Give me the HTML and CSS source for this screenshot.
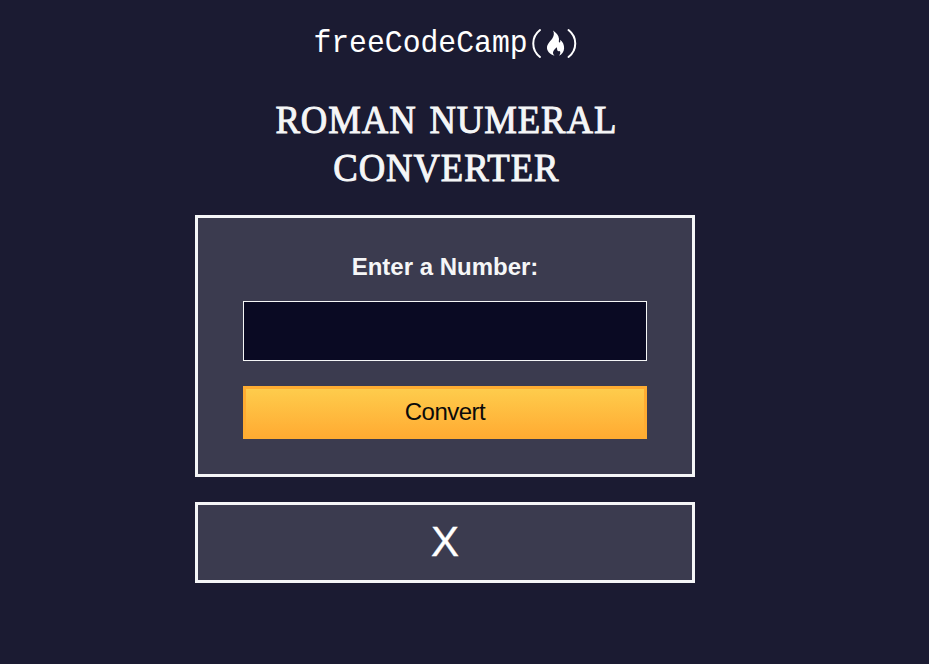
FILE: index.html
```html
<!DOCTYPE html>
<html lang="en">
<head>
<meta charset="utf-8">
<title>Roman Numeral Converter</title>
<link rel="stylesheet" href="styles.css">
</head>
<body>
<main class="page">
  <svg class="logo" width="270" height="40" viewBox="0 0 270 40" role="img" aria-label="freeCodeCamp">
    <g transform="translate(0 29) scale(.93 1)"><text class="logo-text" x="1.500" y="0">freeCodeCamp</text></g>
    <path class="paren" d="M228 7 C219 14 219 27 228 34 M256.500 7 C265.500 14 265.500 27 256.500 34"/>
    <path class="flame" d="M241 7.500c3 2 5.700 4.800 6 8.300.1 1.400-.5 2.700.1 3.500.9.600 1.500-.4 1-2.600 2.800 2 4.200 5.300 4 8.800-.2 3.300-2 5.700-5 7.300 1.400-2 1.600-3.600.7-4.800-.8.500-1.900.4-2.400-.4-.5-.9 0-2-.8-3.300-.8 1.500-3.600 2.800-3.600 5.300 0 1.300.6 2.300 1.500 3.200-5-1.600-7.800-4.800-7.500-8.800.4-4.600 6-7.200 6.800-12.300.2-1.500-.1-2.900-.8-4.200z"/>
  </svg>
  <h1 class="title"><span class="line">ROMAN NUMERAL</span><span class="line">CONVERTER</span></h1>
  <form class="card">
    <label class="label" for="number">Enter a Number:</label>
    <input class="number" id="number" type="text">
    <button class="convert" type="button">Convert</button>
  </form>
  <output class="result">X</output>
</main>
</body>
</html>
```
FILE: styles.css
```css
* { box-sizing: border-box; }
body {
  margin: 0;
  min-height: 664px;
  background: #1b1b32;
  color: #f5f6f7;
  font-family: "Liberation Sans", Arial, sans-serif;
}
.page {
  width: 500px;
  margin-left: 195px;
  padding-top: 23px;
  display: flex;
  flex-direction: column;
  align-items: center;
}
.logo { display: block; margin-left: 4px; overflow: visible; }
.logo-text { font: 32px "Liberation Mono", monospace; fill: #fff; }
.paren { fill: none; stroke: #fff; stroke-width: 2; stroke-linecap: round; }
.flame { fill: #fff; }
.title {
  margin: 33px 0 23px;
  font: 400 40px/48px "Liberation Serif", serif;
  text-align: center;
  letter-spacing: 1px;
  word-spacing: 3px;
  transform: translateX(1px) scaleX(.917);
  -webkit-text-stroke: 1px #f5f6f7;
}
.line { display: block; white-space: nowrap; }
.card {
  width: 500px;
  height: 262px;
  padding: 35px 45px;
  border: 3px solid #f5f6f7;
  background: #3b3b4f;
  display: flex;
  flex-direction: column;
}
.label { font-size: 24px; font-weight: 700; line-height: 28px; text-align: center; }
.number {
  width: 100%;
  height: 60px;
  margin: 20px 0 25px;
  padding: 10px;
  border: 1px solid #f5f6f7;
  border-radius: 0;
  background: #0a0a23;
  color: #f5f6f7;
  font: 24px "Liberation Sans", sans-serif;
  text-align: center;
}
.convert {
  height: 53px;
  padding: 0 0 2px;
  border: 3px solid #feac32;
  background: linear-gradient(#fecc4c, #ffac33);
  color: #0a0a0a;
  font: 24px "Liberation Sans", sans-serif;
  letter-spacing: -.5px;
}
.result {
  width: 500px;
  height: 81px;
  margin-top: 25px;
  border: 3px solid #f5f6f7;
  background: #3b3b4f;
  color: #fff;
  font-size: 42px;
  line-height: 73px;
  text-align: center;
  -webkit-text-stroke: .4px #fff;
}
```
